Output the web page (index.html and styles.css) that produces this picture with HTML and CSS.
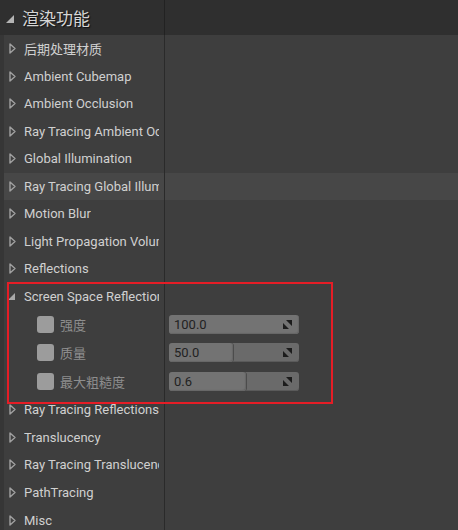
FILE: index.html
```html
<!DOCTYPE html>
<html>
<head>
<meta charset="utf-8">
<link rel="stylesheet" href="styles.css">
</head>
<body>
<div class="panel">
  <div class="header">
    <div class="hcell">
      <span class="tri-open"></span>
      <span class="title">渲染功能</span>
    </div>
    <div class="hright"></div>
  </div>
  <div class="rows">
    <div class="row"><div class="name"><svg class="arrow" width="7" height="11" viewBox="0 0 7 11"><path d="M1 1L6 5.5L1 10Z" fill="none" stroke="#a0a0a0" stroke-width="1.4" stroke-linejoin="round"/></svg><span class="lbl">后期处理材质</span></div><div class="val"></div></div>
    <div class="row"><div class="name"><svg class="arrow" width="7" height="11" viewBox="0 0 7 11"><path d="M1 1L6 5.5L1 10Z" fill="none" stroke="#a0a0a0" stroke-width="1.4" stroke-linejoin="round"/></svg><span class="lbl">Ambient Cubemap</span></div><div class="val"></div></div>
    <div class="row"><div class="name"><svg class="arrow" width="7" height="11" viewBox="0 0 7 11"><path d="M1 1L6 5.5L1 10Z" fill="none" stroke="#a0a0a0" stroke-width="1.4" stroke-linejoin="round"/></svg><span class="lbl">Ambient Occlusion</span></div><div class="val"></div></div>
    <div class="row"><div class="name"><svg class="arrow" width="7" height="11" viewBox="0 0 7 11"><path d="M1 1L6 5.5L1 10Z" fill="none" stroke="#a0a0a0" stroke-width="1.4" stroke-linejoin="round"/></svg><span class="lbl">Ray Tracing Ambient Occlusion</span></div><div class="val"></div></div>
    <div class="row"><div class="name"><svg class="arrow" width="7" height="11" viewBox="0 0 7 11"><path d="M1 1L6 5.5L1 10Z" fill="none" stroke="#a0a0a0" stroke-width="1.4" stroke-linejoin="round"/></svg><span class="lbl">Global Illumination</span></div><div class="val"></div></div>
    <div class="row hover"><div class="name"><svg class="arrow" width="7" height="11" viewBox="0 0 7 11"><path d="M1 1L6 5.5L1 10Z" fill="none" stroke="#a0a0a0" stroke-width="1.4" stroke-linejoin="round"/></svg><span class="lbl">Ray Tracing Global Illumination</span></div><div class="val"></div></div>
    <div class="row"><div class="name"><svg class="arrow" width="7" height="11" viewBox="0 0 7 11"><path d="M1 1L6 5.5L1 10Z" fill="none" stroke="#a0a0a0" stroke-width="1.4" stroke-linejoin="round"/></svg><span class="lbl">Motion Blur</span></div><div class="val"></div></div>
    <div class="row"><div class="name"><svg class="arrow" width="7" height="11" viewBox="0 0 7 11"><path d="M1 1L6 5.5L1 10Z" fill="none" stroke="#a0a0a0" stroke-width="1.4" stroke-linejoin="round"/></svg><span class="lbl">Light Propagation Volume</span></div><div class="val"></div></div>
    <div class="row"><div class="name"><svg class="arrow" width="7" height="11" viewBox="0 0 7 11"><path d="M1 1L6 5.5L1 10Z" fill="none" stroke="#a0a0a0" stroke-width="1.4" stroke-linejoin="round"/></svg><span class="lbl">Reflections</span></div><div class="val"></div></div>
    <div class="group">
      <div class="row"><div class="name"><span class="tri-open small"></span><span class="lbl">Screen Space Reflections</span></div><div class="val"></div></div>
      <div class="row sub"><div class="name"><span class="check"></span><span class="lbl dim">强度</span></div><div class="val"><div class="num"><div class="fill fill-100"></div><span class="numtxt">100.0</span><svg class="spin" width="11" height="11" viewBox="0 0 11 11"><path d="M4 1H10V7Z M1 4V10H7Z" fill="#1c1c1c"/></svg></div></div></div>
      <div class="row sub"><div class="name"><span class="check"></span><span class="lbl dim">质量</span></div><div class="val"><div class="num"><div class="fill fill-50"></div><span class="numtxt">50.0</span><svg class="spin" width="11" height="11" viewBox="0 0 11 11"><path d="M4 1H10V7Z M1 4V10H7Z" fill="#1c1c1c"/></svg></div></div></div>
      <div class="row sub"><div class="name"><span class="check"></span><span class="lbl dim">最大粗糙度</span></div><div class="val"><div class="num"><div class="fill fill-60"></div><span class="numtxt">0.6</span><svg class="spin" width="11" height="11" viewBox="0 0 11 11"><path d="M4 1H10V7Z M1 4V10H7Z" fill="#1c1c1c"/></svg></div></div></div>
    </div>
    <div class="row"><div class="name"><svg class="arrow" width="7" height="11" viewBox="0 0 7 11"><path d="M1 1L6 5.5L1 10Z" fill="none" stroke="#a0a0a0" stroke-width="1.4" stroke-linejoin="round"/></svg><span class="lbl">Ray Tracing Reflections</span></div><div class="val"></div></div>
    <div class="row"><div class="name"><svg class="arrow" width="7" height="11" viewBox="0 0 7 11"><path d="M1 1L6 5.5L1 10Z" fill="none" stroke="#a0a0a0" stroke-width="1.4" stroke-linejoin="round"/></svg><span class="lbl">Translucency</span></div><div class="val"></div></div>
    <div class="row"><div class="name"><svg class="arrow" width="7" height="11" viewBox="0 0 7 11"><path d="M1 1L6 5.5L1 10Z" fill="none" stroke="#a0a0a0" stroke-width="1.4" stroke-linejoin="round"/></svg><span class="lbl">Ray Tracing Translucency</span></div><div class="val"></div></div>
    <div class="row"><div class="name"><svg class="arrow" width="7" height="11" viewBox="0 0 7 11"><path d="M1 1L6 5.5L1 10Z" fill="none" stroke="#a0a0a0" stroke-width="1.4" stroke-linejoin="round"/></svg><span class="lbl">PathTracing</span></div><div class="val"></div></div>
    <div class="row"><div class="name"><svg class="arrow" width="7" height="11" viewBox="0 0 7 11"><path d="M1 1L6 5.5L1 10Z" fill="none" stroke="#a0a0a0" stroke-width="1.4" stroke-linejoin="round"/></svg><span class="lbl">Misc</span></div><div class="val"></div></div>
  </div>
</div>
</body>
</html>
```
FILE: styles.css
```css
html, body {
  margin: 0;
  padding: 0;
  background: #3e3e3e;
  overflow: hidden;
}
body {
  width: 458px;
  height: 530px;
  font-family: Roboto, "Noto Sans CJK SC", sans-serif;
  font-size: 13px;
  color: #d0d0d0;
}
.panel {
  display: flex;
  flex-direction: column;
}
.header {
  display: flex;
  height: 35px;
  background: #2f2f2f;
}
.hcell {
  width: 164px;
  border-right: 1px solid #222;
  display: flex;
  align-items: center;
  box-sizing: content-box;
}
.hright { flex: 1; }
.tri-open {
  flex: none;
  width: 0;
  height: 0;
  border-style: solid;
  border-width: 0 0 8px 8px;
  border-color: transparent transparent #b4b4b4 transparent;
  margin-left: 6px;
  margin-top: 2px;
}
.tri-open.small {
  border-width: 0 0 7px 7px;
  border-color: transparent transparent #a8a8a8 transparent;
  margin-left: 4px;
  margin-top: 0;
}
.title {
  font-size: 17px;
  margin-left: 8px;
  color: #d6d6d6;
  text-shadow: 1px 1px 1px #111;
}
.rows {
  display: flex;
  flex-direction: column;
  border-left: 4px solid #363636;
}
.row {
  display: flex;
  height: 27.5px;
  background: #3e3e3e;
}
.row.sub { height: 28.5px; }
.group ~ .row { height: 27.7px; }
.row.hover { background: #474747; }
.name {
  width: 161px;
  box-sizing: border-box;
  padding-right: 5px;
  border-right: 1px solid #2a2a2a;
  display: flex;
  align-items: center;
  overflow: hidden;
  white-space: nowrap;
}
.val {
  flex: 1;
  display: flex;
  align-items: center;
}
.arrow {
  flex: none;
  margin-left: 5px;
}
.lbl {
  margin-left: 8px;
  flex: 0 1 auto;
  min-width: 0;
  overflow: hidden;
}
.tri-open.small + .lbl { margin-left: 9px; }
.lbl.dim { color: #8e8e8e; margin-left: 6px; }
.check {
  flex: none;
  width: 17px;
  height: 17px;
  margin-left: 33px;
  background: #9c9c9c;
  border-radius: 3px;
}
.group {
  position: relative;
}
.group::after {
  content: "";
  position: absolute;
  left: 3px;
  top: -1px;
  width: 322px;
  height: 118px;
  border: 2px solid #e51d26;
  pointer-events: none;
}
.num {
  position: relative;
  margin-left: 4px;
  width: 130px;
  height: 19px;
  border-radius: 3px;
  background: #6a6a6a;
  display: flex;
  align-items: center;
  overflow: hidden;
  box-shadow: inset 0 -1px 0 #5a5a5a;
}
.fill {
  position: absolute;
  left: 0;
  top: 0;
  bottom: 0;
  background: #737373;
  border-radius: 3px;
  box-shadow: 1px 0 0 #4c4c4c, inset -1px -1px 1px #666;
}
.fill-100 { width: 100%; }
.fill-50 { width: 49%; }
.fill-60 { width: 59%; }
.numtxt {
  position: relative;
  margin-left: 5px;
  color: #222;
  font-size: 13px;
  flex: 1;
}
.spin {
  position: relative;
  margin-right: 6px;
}
```
